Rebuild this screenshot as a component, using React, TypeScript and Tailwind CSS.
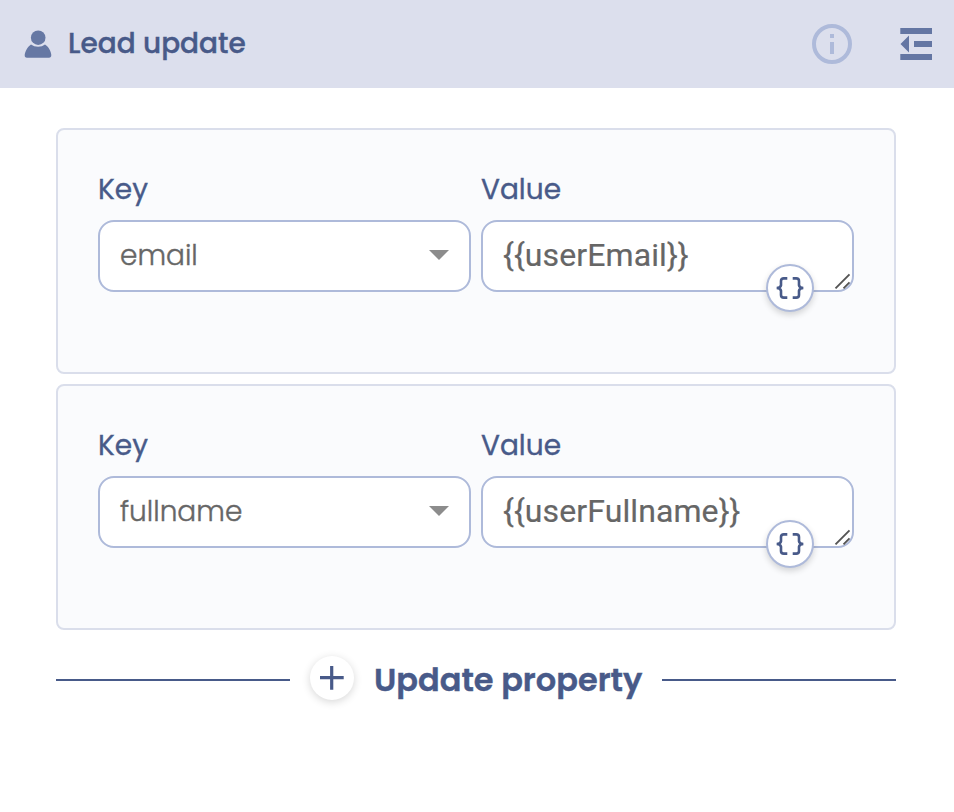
import React from "react";

function UserIcon() {
  return (
    <svg width="28" height="28" viewBox="0 0 28 28" fill="#6678a4">
      <circle cx="14.200" cy="7.700" r="7.300" />
      <path d="M7 14.400Q10 16.700 14.100 16.700T21 14.400C24.500 16.500 27.200 21.500 27.300 25Q27.300 27.700 25 27.700H3Q0.500 27.700 0.700 25C1 21.500 3.700 16.500 7 14.400z" />
    </svg>
  );
}

function InfoIcon() {
  return (
    <svg width="40" height="40" viewBox="0 0 40 40" fill="#aebada">
      <circle cx="20" cy="20" r="18" fill="none" stroke="#aebada" strokeWidth="4" />
      <path d="M18 10h4v4h-4zM18 18h4v12h-4z" />
    </svg>
  );
}

function CollapseIcon() {
  return (
    <svg width="32" height="32" viewBox="0 0 32 32" fill="#6476a3">
      <path d="M0.300 0h31.700v6H0.300zM14 13h18v6H14zM0.300 26h31.700v6H0.300zM9 7.500v17L0.500 16z" />
    </svg>
  );
}

function BracesIcon() {
  return (
    <svg width="28" height="24" viewBox="0 0 28 24" fill="none" stroke="#485a89" strokeWidth="2.600">
      <path d="M11.300 2.400H7.800Q5 2.400 5 5V9.200Q4.600 11.800 0.700 12Q4.600 12.200 5 14.800V19Q5 21.600 7.800 21.600H11.300" />
      <path d="M16.700 2.400H20.200Q23 2.400 23 5V9.200Q23.400 11.800 27.300 12Q23.400 12.200 23 14.800V19Q23 21.600 20.200 21.600H16.700" />
    </svg>
  );
}

const label = "h-[40px] text-[28px] leading-[40px] text-[#485a89] [-webkit-text-stroke:0.35px_#485a89]";
const box = "relative mt-[10px] flex h-[72px] items-center rounded-[16px] border-2 border-[#aebada] bg-white pl-5";

function PropertyCard({ name, value }: { name: string; value: string }) {
  return (
    <section className="flex h-[246px] gap-[10px] rounded-lg border-2 border-[#dadeeb] bg-[#fafbfd] px-10 pt-10">
      <div className="w-[373px]">
        <div className={label}>Key</div>
        <div className={box + " justify-between pr-5"}>
          <span className="text-[28px] leading-[40px] font-light text-[#666] [-webkit-text-stroke:0.4px_#666]">{name}</span>
          <svg className="mb-[2px]" width="20" height="10" viewBox="0 0 20 10" fill="#8c8c8c">
            <path d="M0 0h20L10 10z" />
          </svg>
        </div>
      </div>
      <div className="w-[373px]">
        <div className={label}>Value</div>
        <div className={box}>
          <span className="pb-[2px] font-['Roboto',sans-serif] text-[32px] leading-[40px] tracking-[0.1px] text-[#666] [-webkit-text-stroke:0.2px_#666]">{value}</span>
          <svg className="absolute right-0 bottom-0" width="18" height="18" viewBox="0 0 18 18">
            <path d="M1.500 16.300L15.500 2.300M9.500 16.300L15.500 10.300" stroke="#555" strokeWidth="1.900" fill="none" />
          </svg>
          <button className="absolute right-[38px] -bottom-[22px] flex size-12 items-center justify-center rounded-full border-2 border-[#aebada] bg-white shadow-[0_3px_6px_rgba(0,0,0,0.16)]">
            <BracesIcon />
          </button>
        </div>
      </div>
    </section>
  );
}

export default function App() {
  return (
    <div className="h-[812px] w-[954px] overflow-hidden bg-white font-['Poppins','Inter',sans-serif]">
      <header className="flex h-[88px] items-center bg-[#dcdfed] pr-[22px] pl-6">
        <UserIcon />
        <h1 className="ml-4 flex-1 text-[28px] leading-[40px] font-medium text-[#485a89] [-webkit-text-stroke:0.35px_#485a89]">Lead update</h1>
        <InfoIcon />
        <div className="ml-12">
          <CollapseIcon />
        </div>
      </header>
      <main className="flex w-[896px] flex-col gap-[10px] pt-10 pl-14">
        <PropertyCard name="email" value="{{userEmail}}" />
        <PropertyCard name="fullname" value="{{userFullname}}" />
        <div className="mt-4 flex h-[46px] items-center">
          <div className="mt-[2px] h-[2px] w-[234px] bg-[#485a89]" />
          <button className="mb-[2px] ml-5 flex size-11 items-center justify-center rounded-full bg-white shadow-[0_2px_8px_rgba(0,0,0,0.16)]">
            <svg width="24" height="24" viewBox="0 0 24 24" stroke="#485a89" strokeWidth="3.200">
              <path d="M0 11.700h23.700M11.700 0v23.700" />
            </svg>
          </button>
          <span className="mt-[2px] ml-5 w-[268px] text-[32px] leading-[44px] font-semibold whitespace-nowrap text-[#485a89] [-webkit-text-stroke:0.4px_#485a89]">Update property</span>
          <div className="mt-[2px] ml-5 h-[2px] flex-1 bg-[#485a89]" />
        </div>
      </main>
    </div>
  );
}
